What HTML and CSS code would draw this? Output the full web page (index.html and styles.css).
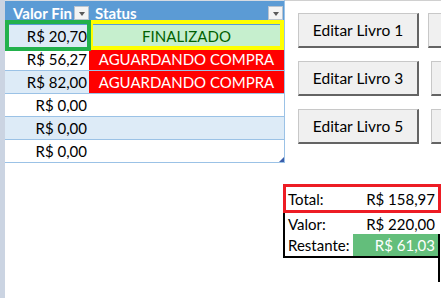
FILE: index.html
```html
<!DOCTYPE html>
<html lang="pt">
<head>
<meta charset="utf-8">
<link rel="stylesheet" href="styles.css">
</head>
<body>
<div class="page">
  <div class="strip"></div>
  <div class="content">
    <div class="top">
      <div class="table">
        <div class="thead">
          <div class="th th-valor"><span class="th-text">Valor Fin</span><span class="dd"></span></div>
          <div class="th th-status"><span class="th-text">Status</span><span class="dd dd-status"></span></div>
        </div>
        <div class="tr band"><div class="td num">R$ 20,70</div><div class="td st ok">FINALIZADO</div></div>
        <div class="tr"><div class="td num">R$ 56,27</div><div class="td st wait">AGUARDANDO COMPRA</div></div>
        <div class="tr band"><div class="td num">R$ 82,00</div><div class="td st wait">AGUARDANDO COMPRA</div></div>
        <div class="tr"><div class="td num">R$ 0,00</div><div class="td st"></div></div>
        <div class="tr band"><div class="td num">R$ 0,00</div><div class="td st"></div></div>
        <div class="tr"><div class="td num">R$ 0,00</div><div class="td st"></div></div>
        <div class="sel-yellow"></div>
        <div class="sel-green"></div>
        <div class="handle"></div>
      </div>
      <div class="buttons">
        <div class="grid">
          <div class="btn">Editar Livro 1</div>
          <div class="btn btn-cut"></div>
          <div class="btn">Editar Livro 3</div>
          <div class="btn btn-cut btn-shift"></div>
          <div class="btn">Editar Livro 5</div>
          <div class="btn btn-cut btn-shift"></div>
        </div>
      </div>
    </div>
    <div class="totals">
      <div class="t-total"><span>Total:</span><span>R$ 158,97</span></div>
      <div class="t-valor"><span>Valor:</span><span>R$ 220,00</span></div>
      <div class="t-rest"><span class="rest-label">Restante:</span><span class="rest-val">R$ 61,03</span></div>
      <div class="tail"></div>
    </div>
  </div>
</div>
</body>
</html>
```

FILE: styles.css
```css
html, body {
  margin: 0;
  padding: 0;
  width: 441px;
  height: 298px;
  overflow: hidden;
  background: #fff;
  font-family: Lato, "Open Sans", sans-serif;
  font-size: 15px;
  color: #000;
}

.page {
  display: flex;
  height: 298px;
}

.strip {
  flex: none;
  width: 5px;
  background: #cbd4e2;
}

.content {
  flex: 1;
  min-width: 0;
  display: flex;
  flex-direction: column;
}

.top {
  display: flex;
  height: 163px;
}

.table {
  position: relative;
  flex: none;
  width: 280px;
  height: 163px;
  border-right: 1px solid #9bc2e6;
  box-sizing: border-box;
}

.thead {
  display: flex;
  height: 25px;
  box-sizing: border-box;
  border-top: 1px solid #d6dbe2;
  background: #5b9bd5;
}

.th {
  display: flex;
  align-items: center;
  box-sizing: border-box;
  color: #fff;
  font-weight: 700;
  font-size: 15px;
}

.th-valor {
  width: 84px;
  padding-left: 8px;
}

.th-status {
  width: 195px;
  padding-left: 6px;
}

.th-text {
  white-space: nowrap;
}

.dd {
  margin-left: auto;
  width: 15px;
  height: 14px;
  box-sizing: border-box;
  background: #f4f4f4;
  border: 1px solid #b9c3cf;
  display: flex;
  align-items: center;
  justify-content: center;
}

.dd::after {
  content: "";
  display: block;
  margin-top: 1px;
  border-left: 3px solid transparent;
  border-right: 3px solid transparent;
  border-top: 4px solid #5a5a5a;
}

.dd-status {
  margin-right: 1px;
}

.tr {
  display: flex;
  height: 23px;
  box-sizing: border-box;
  border-bottom: 1px solid #9bc2e6;
}

.band {
  background: #ddebf7;
}

.td {
  display: flex;
  align-items: center;
  box-sizing: border-box;
  white-space: nowrap;
}

.num {
  width: 84px;
  justify-content: flex-end;
  padding-right: 2px;
}

.st {
  width: 195px;
  justify-content: center;
}

.ok {
  background: #c6efce;
  color: #006100;
}

.wait {
  background: #ff0000;
  color: #fff;
}

.sel-yellow {
  position: absolute;
  left: 84px;
  top: 20px;
  width: 195px;
  height: 30px;
  box-sizing: border-box;
  border: 4px solid #ffff00;
}

.sel-green {
  position: absolute;
  left: 0;
  top: 20px;
  width: 86px;
  height: 31px;
  box-sizing: border-box;
  border: 4px solid #22b14c;
}

.handle {
  position: absolute;
  right: 0;
  bottom: 1px;
  width: 0;
  height: 0;
  border-left: 5px solid transparent;
  border-bottom: 5px solid #3a5daa;
}

.buttons {
  flex: 1;
  min-width: 0;
  overflow: hidden;
  border-top: 1px solid #d0d0d0;
  padding: 12px 0 0 13px;
}

.grid {
  display: grid;
  grid-template-columns: 121px 121px;
  column-gap: 9px;
  row-gap: 13px;
  width: max-content;
}

.btn {
  height: 35px;
  box-sizing: border-box;
  background: #f0f0f0;
  border: 1px solid #c8c8c8;
  border-right: 2px solid #646464;
  border-bottom: 2px solid #646464;
  display: flex;
  align-items: center;
  justify-content: center;
  font-size: 15.5px;
  white-space: nowrap;
}

.btn-shift {
  margin-left: 3px;
}

.totals {
  margin-left: 278px;
  margin-top: 21px;
  width: 158px;
}

.t-total {
  height: 29px;
  box-sizing: border-box;
  border: 3px solid #ed1c24;
  display: flex;
  align-items: center;
  justify-content: space-between;
  padding: 0 3px 0 2px;
}

.t-valor {
  width: 155px;
  height: 21px;
  box-sizing: border-box;
  border-left: 2px solid #000;
  display: flex;
  align-items: center;
  justify-content: space-between;
  padding: 0 3px;
}

.t-rest {
  width: 157px;
  height: 24px;
  box-sizing: border-box;
  border-left: 2px solid #000;
  border-right: 2px solid #000;
  border-bottom: 2px solid #000;
  display: flex;
}

.rest-label {
  flex: 1;
  display: flex;
  align-items: center;
  padding-left: 3px;
}

.rest-val {
  width: 85px;
  box-sizing: border-box;
  background: #63be7b;
  color: #fff;
  display: flex;
  align-items: center;
  justify-content: flex-end;
  padding-right: 3px;
}

.tail {
  margin-left: 155px;
  width: 2px;
  height: 24px;
  background: #000;
}
```
